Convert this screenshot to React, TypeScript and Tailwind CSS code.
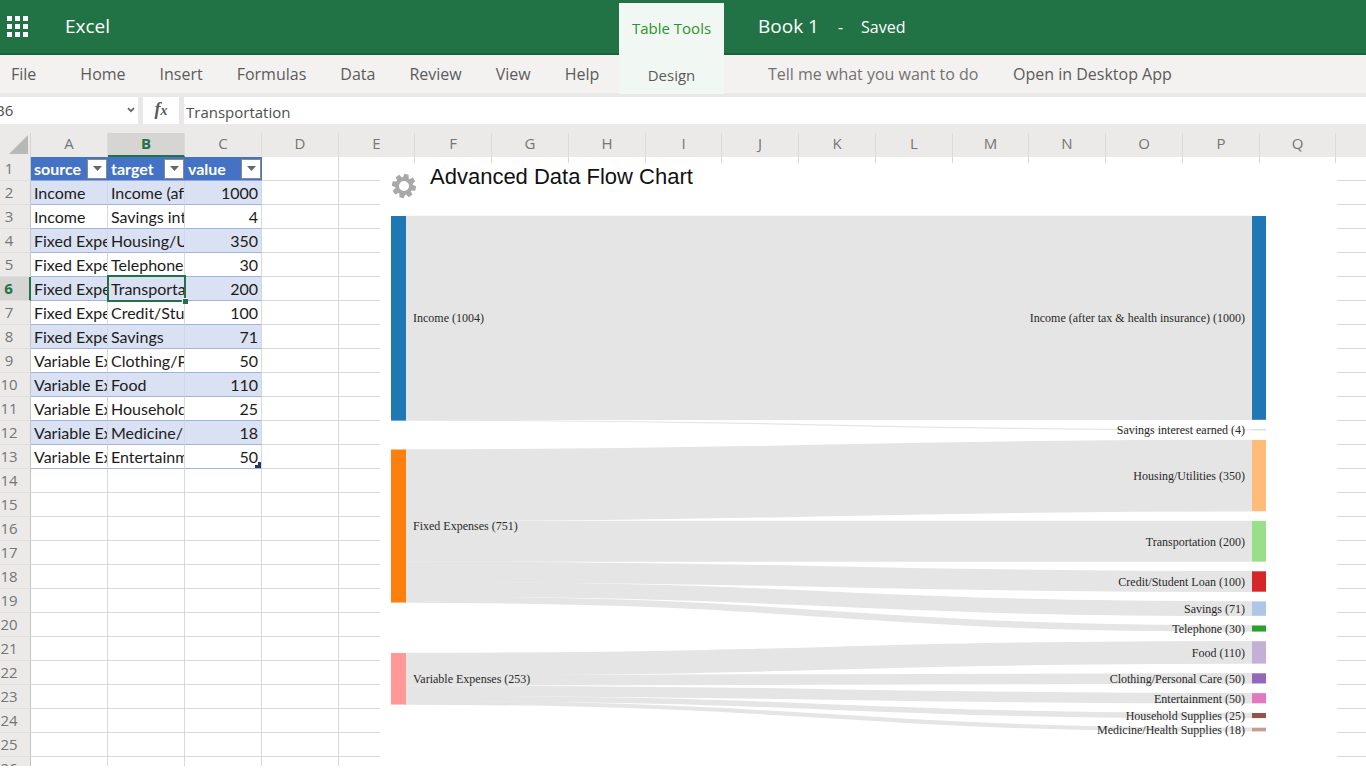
import clsx from "clsx";

type Flow = { source: string; target: string; value: number };

const FLOWS: Flow[] = [
  { source: "Income", target: "Income (after tax & health insurance)", value: 1000 },
  { source: "Income", target: "Savings interest earned", value: 4 },
  { source: "Fixed Expenses", target: "Housing/Utilities", value: 350 },
  { source: "Fixed Expenses", target: "Telephone", value: 30 },
  { source: "Fixed Expenses", target: "Transportation", value: 200 },
  { source: "Fixed Expenses", target: "Credit/Student Loan", value: 100 },
  { source: "Fixed Expenses", target: "Savings", value: 71 },
  { source: "Variable Expenses", target: "Clothing/Personal Care", value: 50 },
  { source: "Variable Expenses", target: "Food", value: 110 },
  { source: "Variable Expenses", target: "Household Supplies", value: 25 },
  { source: "Variable Expenses", target: "Medicine/Health Supplies", value: 18 },
  { source: "Variable Expenses", target: "Entertainment", value: 50 },
];

const COLUMNS = "ABCDEFGHIJKLMNOPQ".split("");
const ROWS = Array.from({ length: 26 }, (_, i) => i + 1);
const SELECTED = { col: 1, row: 6 };

const TABS = ["Home", "Insert", "Formulas", "Data", "Review", "View", "Help"];

// Sankey geometry, in chart pixels
const SCALE = 0.2038;
const NODE_GAP = 9.65;
const NODE_WIDTH = 14;
const LEFT_X = 11;
const RIGHT_X = 872;

const SOURCES = [
  { name: "Income", top: 53, color: "#1f77b4" },
  { name: "Fixed Expenses", top: 286.5, color: "#ff7f0e" },
  { name: "Variable Expenses", top: 490, color: "#ff9896" },
];

const TARGETS = [
  { name: "Income (after tax & health insurance)", color: "#1f77b4" },
  { name: "Savings interest earned", color: "#aec7e8" },
  { name: "Housing/Utilities", color: "#ffbb78" },
  { name: "Transportation", color: "#98df8a" },
  { name: "Credit/Student Loan", color: "#d62728" },
  { name: "Savings", color: "#aec7e8" },
  { name: "Telephone", color: "#2ca02c" },
  { name: "Food", color: "#c5b0d5" },
  { name: "Clothing/Personal Care", color: "#9467bd" },
  { name: "Entertainment", color: "#e377c2" },
  { name: "Household Supplies", color: "#8c564b" },
  { name: "Medicine/Health Supplies", color: "#c49c94" },
];

function buildSankey() {
  const offsets: Record<string, number> = {};
  const sources = SOURCES.map((s) => {
    const value = FLOWS.filter((f) => f.source === s.name).reduce((sum, f) => sum + f.value, 0);
    offsets[s.name] = s.top;
    return { ...s, value, height: value * SCALE };
  });

  let y = 53;
  const links: { key: string; d: string; width: number }[] = [];
  const targets = TARGETS.map((t) => {
    const flow = FLOWS.find((f) => f.target === t.name)!;
    const height = flow.value * SCALE;
    const y0 = offsets[flow.source] + height / 2;
    const y1 = y + height / 2;
    const x0 = LEFT_X + NODE_WIDTH;
    const mid = (x0 + RIGHT_X) / 2;
    // slightly wider than the flow so that neighbours leave no seam
    links.push({ key: t.name, d: `M${x0},${y0}C${mid},${y0} ${mid},${y1} ${RIGHT_X},${y1}`, width: height + 0.4 });
    offsets[flow.source] += height;
    const node = { ...t, value: flow.value, top: y, height };
    y += height + NODE_GAP;
    return node;
  });

  return { sources, targets, links };
}

const sankey = buildSankey();

function SankeyChart() {
  return (
    <svg className="absolute top-0 left-0" width="957" height="603" role="img" aria-label="Advanced Data Flow Chart">
      {sankey.links.map((link) => (
        <path key={link.key} d={link.d} fill="none" stroke="#e5e5e5" strokeWidth={link.width} />
      ))}
      <g className="font-['Liberation_Serif',serif] text-[12px]" fill="#2a2a2a">
        {sankey.sources.map((n) => (
          <g key={n.name}>
            <rect x={LEFT_X} y={n.top} width={NODE_WIDTH + 1} height={n.height} fill={n.color} />
            <text x={33} y={n.top + n.height / 2 + 4}>{`${n.name} (${n.value})`}</text>
          </g>
        ))}
        {sankey.targets.map((n) => (
          <g key={n.name}>
            <rect x={RIGHT_X} y={n.top} width={NODE_WIDTH} height={n.height} fill={n.color} />
            <text x={865} y={n.top + n.height / 2 + 4.5} textAnchor="end">{`${n.name} (${n.value})`}</text>
          </g>
        ))}
      </g>
    </svg>
  );
}

function GearIcon() {
  return (
    <svg width="26" height="26" viewBox="0 0 26 26" aria-hidden="true">
      <g fill="#a9a9a9" transform="rotate(12 13 13)">
        {[0, 45, 90, 135, 180, 225, 270, 315].map((angle) => (
          <path key={angle} d="M10 5.5 10.8 1h4.4l.8 4.5z" transform={`rotate(${angle} 13 13)`} />
        ))}
      </g>
      <circle cx="13" cy="13" r="7" fill="none" stroke="#a9a9a9" strokeWidth="4" />
    </svg>
  );
}

function ChartPanel() {
  return (
    <section className="absolute top-[30px] left-[380px] h-[603px] w-[957px] bg-white">
      <div className="flex items-start">
        <button type="button" aria-label="Chart settings" className="mt-[10px] ml-[11px] h-[26px] w-[26px]">
          <GearIcon />
        </button>
        <h2 className="ml-[13px] font-['Liberation_Sans',sans-serif] text-[22px] leading-[28px] text-[#111]">
          Advanced Data Flow Chart
        </h2>
      </div>
      <SankeyChart />
    </section>
  );
}

function TopBar() {
  return (
    <header className="flex h-[97px] bg-[#e9e8e8] pb-[5px]">
      <div className="w-[619px] shrink-0">
        <div className="flex h-[55px] items-center border-b-2 border-[#1a6339] bg-[#217346] pl-[7px] text-white">
          <button type="button" aria-label="App launcher" className="grid grid-cols-3 gap-[3px]">
            {Array.from({ length: 9 }, (_, i) => (
              <span key={i} className="h-[5px] w-[5px] bg-white" />
            ))}
          </button>
          <span className="ml-[37px] text-[19px]">Excel</span>
        </div>
        <nav className="flex h-[38px] items-center bg-[#f3f2f1] pl-[11px] text-[16px] text-[#5c5b5a]">
          <button type="button" className="mr-[44px]">
            File
          </button>
          <div className="flex gap-[34px]">
            {TABS.map((tab) => (
              <button key={tab} type="button">
                {tab}
              </button>
            ))}
          </div>
        </nav>
      </div>

      <div className="flex w-[105px] shrink-0 flex-col bg-[#217346] pt-[3px]">
        <div className="-mb-[2px] flex grow flex-col items-center bg-[#f1f8f3] pt-[13px]">
          <span className="leading-6 text-[#2c932c]">Table Tools</span>
          <button type="button" className="mt-[23px] leading-6 text-[#5c5b5a]">
            Design
          </button>
        </div>
      </div>

      <div className="min-w-0 grow">
        <div className="flex h-[55px] items-center border-b-2 border-[#1a6339] bg-[#217346] pl-[34px] text-[16px] text-white">
          <span className="text-[19px]">Book 1</span>
          <span className="ml-[19px]">-</span>
          <span className="ml-[18px]">Saved</span>
        </div>
        <div className="flex h-[38px] items-center bg-[#f3f2f1] pl-[44px] text-[16px] text-[#5c5b5a]">
          <input
            type="text"
            aria-label="Tell me what you want to do"
            placeholder="Tell me what you want to do"
            className="w-[245px] bg-transparent outline-none placeholder:text-[#73716f]"
          />
          <button type="button">Open in Desktop App</button>
        </div>
      </div>
    </header>
  );
}

function FormulaBar() {
  return (
    <div className="flex h-[27px] gap-[5px] bg-[#e9e8e8] text-[#4f4e4d]">
      <div className="flex w-[138px] shrink-0 items-center bg-white">
        <input type="text" aria-label="Name box" defaultValue="B6" className="w-[127px] -indent-[5px] outline-none" />
        <svg width="8" height="6" viewBox="0 0 8 6" aria-hidden="true">
          <path d="M1 1.2 4 4.2 7 1.2" fill="none" stroke="#666" strokeWidth="1.8" />
        </svg>
      </div>
      <button
        type="button"
        aria-label="Insert function"
        className="w-[36px] shrink-0 bg-white font-['Liberation_Serif',serif] text-[18px] leading-[24px] font-bold text-[#5a5a5a] italic"
      >
        f<span className="text-[14px]">x</span>
      </button>
      <input
        type="text"
        aria-label="Formula bar"
        defaultValue="Transportation"
        className="min-w-0 grow bg-white pt-1 pl-[2px] outline-none"
      />
    </div>
  );
}

function FilterButton({ label }: { label: string }) {
  return (
    <button
      type="button"
      aria-label={`Filter ${label}`}
      className="absolute top-[2px] right-[1px] flex h-5 w-5 items-center justify-center border border-[#8a8a8a] bg-white"
    >
      <svg width="9" height="5" viewBox="0 0 9 5" aria-hidden="true">
        <path d="M0 0h9L4.5 5z" fill="#666" />
      </svg>
    </button>
  );
}

function Cell({ row, col }: { row: number; col: number }) {
  const inTable = row <= 13 && col < 3;
  if (!inTable) {
    return <td className="border-r border-b border-[#d9d9d9]" />;
  }

  if (row === 1) {
    const label = ["source", "target", "value"][col];
    return (
      <th className="relative border-b border-[#8ea9db] bg-[#4472c4] pt-px pl-[3px] text-left font-bold text-white">
        {label}
        <FilterButton label={label} />
      </th>
    );
  }

  const flow = FLOWS[row - 2];
  const text = [flow.source, flow.target, flow.value][col];
  const selected = row === SELECTED.row && col === SELECTED.col;
  return (
    <td
      className={clsx(
        "relative border-r border-b border-b-[#9fb3e0] pt-px text-[#1c1c1c]",
        row % 2 === 0 ? "border-r-[#d0d7ea] bg-[#d9e1f2]" : "border-r-[#d9d9d9]",
        col === 2 && "border-r-[#9fb3e0] pr-[3px] text-right",
      )}
    >
      {col === 2 ? text : <div className="overflow-hidden pl-[3px] whitespace-nowrap">{text}</div>}
      {selected && (
        <span className="absolute -top-[2px] -right-[2px] -bottom-[2px] -left-[1px] z-10 border-2 border-[#217346]">
          <span className="absolute -right-[4px] -bottom-[4px] h-[6px] w-[6px] border-t border-l border-white bg-[#217346]" />
        </span>
      )}
      {row === 13 && col === 2 && (
        <svg className="absolute right-0 bottom-0" width="6" height="6" aria-hidden="true">
          <path d="M3 0h3v6H0V3h3z" fill="#1f3864" />
        </svg>
      )}
    </td>
  );
}

function Sheet() {
  return (
    <table className="w-full table-fixed border-separate border-spacing-0">
      <colgroup>
        <col className="w-[31px]" />
        {COLUMNS.map((name, i) => (
          <col key={name} className={i > 0 && i % 4 === 0 ? "w-[76px]" : "w-[77px]"} />
        ))}
        <col />
      </colgroup>
      <thead>
        <tr className="h-6 bg-[#ebeae9] text-[15px] leading-[20px] text-[#757575]">
          <td className="border-r border-[#d4d4d4]">
            <svg className="ml-[9px]" width="19" height="19" aria-hidden="true">
              <path d="M19 0v19H0z" fill="#b8b8b8" />
            </svg>
          </td>
          {COLUMNS.map((name, i) => (
            <th
              key={name}
              scope="col"
              className={clsx(
                "border-r border-[#dcdcdc] align-top text-center",
                i === SELECTED.col
                  ? "border-b-2 border-b-[#217346] bg-[#d6d5d4] font-bold text-[#217346]"
                  : "font-normal",
              )}
            >
              {name}
            </th>
          ))}
          <td />
        </tr>
      </thead>
      <tbody>
        {ROWS.map((row) => (
          <tr key={row} className="h-6 font-['Lato',sans-serif] text-[16px] leading-[22px]">
            <th
              scope="row"
              className={clsx(
                "border-b border-b-[#e0dfde] pr-[12px] text-center font-['Open_Sans',sans-serif] text-[15px]",
                row === SELECTED.row
                  ? "border-r-2 border-r-[#217346] bg-[#d6d5d4] font-bold text-[#217346]"
                  : "border-r border-r-[#c4c4c4] bg-[#ebeae9] font-normal text-[#757575]",
              )}
            >
              {row}
            </th>
            {COLUMNS.map((name, col) => (
              <Cell key={name} row={row} col={col} />
            ))}
            <td className="border-b border-[#d9d9d9]" />
          </tr>
        ))}
      </tbody>
    </table>
  );
}

export default function App() {
  return (
    <div className="flex h-screen flex-col overflow-hidden bg-white pb-[2px] font-['Open_Sans',sans-serif] text-[15px]">
      <TopBar />
      <FormulaBar />
      <div className="h-[9px] shrink-0 bg-[#ebeae9]" />
      <main className="relative min-h-0 grow overflow-hidden">
        <Sheet />
        <ChartPanel />
      </main>
    </div>
  );
}
